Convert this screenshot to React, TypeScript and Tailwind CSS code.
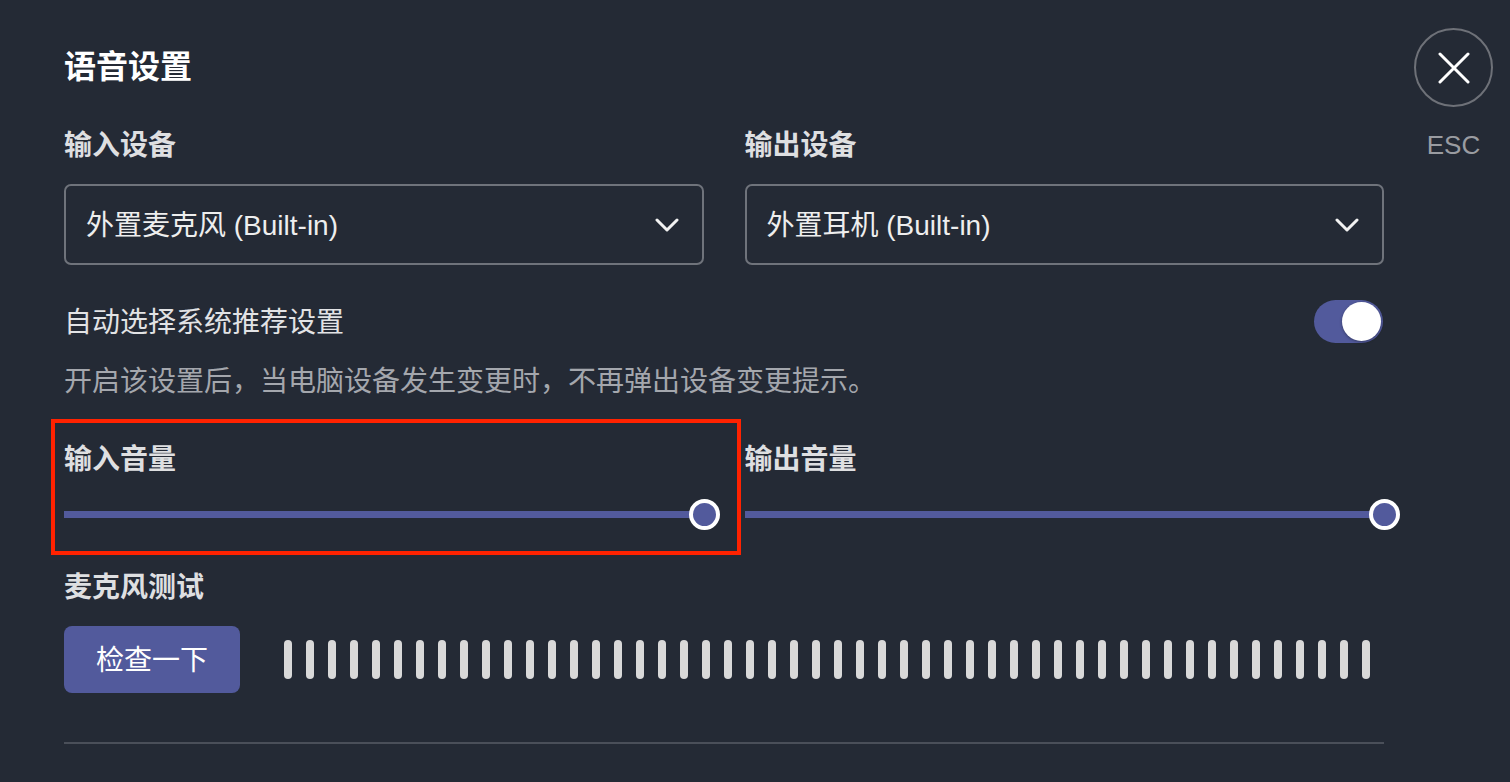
import { useState } from "react";

const FONT = "font-['Liberation_Sans','Noto_Sans_CJK_SC',sans-serif]";

function Chevron() {
  return (
    <svg width="24" height="16" viewBox="0 0 24 16" fill="none">
      <polyline
        points="2,3 12,13 22,3"
        stroke="#f2f2f2"
        strokeWidth="3"
        strokeLinecap="round"
        strokeLinejoin="round"
      />
    </svg>
  );
}

function DeviceSelect({ label, value }: { label: string; value: string }) {
  return (
    <div className="flex flex-col">
      <p className="pt-[2px] text-[28px] leading-[40px] font-bold text-[#dedfe1]">{label}</p>
      <div className="mt-[18px] h-[81px] rounded-[7px] border-2 border-[#6f737b] flex items-center justify-between pl-[20px] pr-[23px]">
        <span className="pt-[3px] text-[28px] leading-[40px] text-[#eeeeee]">{value}</span>
        <Chevron />
      </div>
    </div>
  );
}

function VolumeSlider({ label, marked }: { label: string; marked?: boolean }) {
  return (
    <div className="relative flex flex-col">
      {/* annotation frame */}
      {marked && (
        <div className="absolute -left-[13px] -top-[19px] w-[690px] h-[136px] border-[4px] border-[#ff2200] pointer-events-none" />
      )}
      <p className="pt-[2px] text-[28px] leading-[40px] font-bold text-[#dedfe1]">{label}</p>
      <div className="relative mt-[19px] h-[31px] flex items-center">
        <div className="w-full h-[7px] bg-[#525a9c]" />
        <div className="absolute -right-[16px] top-0 w-[31px] h-[31px] rounded-full bg-[#525a9c] border-[4px] border-white" />
      </div>
    </div>
  );
}

export default function App() {
  const [autoPick, setAutoPick] = useState(true);
  const bars = Array.from({ length: 50 }, (_, i) => i);

  return (
    <div className={`w-[1510px] h-[782px] bg-[#242a35] flex pl-[64px] pt-[28px] overflow-hidden ${FONT}`}>
      {/* MAIN */}
      <div className="w-[1320px] flex flex-col">
        <h1 className="mt-[19px] text-[32px] leading-[40px] font-bold text-white">语音设置</h1>

        <div className="mt-[37px] grid grid-cols-2 gap-x-[41px]">
          <DeviceSelect label="输入设备" value="外置麦克风 (Built-in)" />
          <DeviceSelect label="输出设备" value="外置耳机 (Built-in)" />
        </div>

        {/* AUTO SELECT */}
        <div className="mt-[35px] h-[43px] flex items-center justify-between">
          <span className="pt-[2px] text-[28px] leading-[40px] text-[#e2e3e5]">自动选择系统推荐设置</span>
          <button
            onClick={() => setAutoPick(!autoPick)}
            className={`mr-[1px] w-[69px] h-[43px] rounded-full p-[2px] flex ${
              autoPick ? "bg-[#525a9c] justify-end" : "bg-[#4b505a] justify-start"
            }`}
          >
            <span className="w-[39px] h-[39px] rounded-full bg-white shadow-[0_1px_3px_rgba(0,0,0,0.35)]" />
          </button>
        </div>
        <p className="mt-[17px] pt-[2px] text-[28px] leading-[40px] text-[#a4a7ad]">
          开启该设置后，当电脑设备发生变更时，不再弹出设备变更提示。
        </p>

        {/* VOLUMES */}
        <div className="mt-[36px] grid grid-cols-2 gap-x-[41px]">
          <VolumeSlider label="输入音量" marked />
          <VolumeSlider label="输出音量" />
        </div>

        {/* MIC TEST */}
        <p className="mt-[36px] pt-[2px] text-[28px] leading-[40px] font-bold text-[#dedfe1]">麦克风测试</p>
        <div className="mt-[18px] flex items-center">
          <button className="w-[176px] h-[67px] rounded-[8px] bg-[#525a9c] pt-[2px] text-[28px] leading-[40px] text-white">
            检查一下
          </button>
          <div className="ml-[44px] flex gap-[14px]">
            {bars.map((b) => (
              <span key={b} className="w-[8px] h-[39px] rounded-full bg-[#d9d9d9]" />
            ))}
          </div>
        </div>

        <div className="mt-[49px] h-[2px] bg-[#4a4f59]" />
      </div>

      {/* CLOSE */}
      <div className="ml-[30px] w-[79px] flex flex-col items-center">
        <button className="w-[79px] h-[79px] rounded-full border-2 border-[#6e7178] flex items-center justify-center">
          <svg width="32" height="32" viewBox="0 0 32 32" fill="none">
            <path d="M2 2 30 30 M30 2 2 30" stroke="#ffffff" strokeWidth="3" strokeLinecap="round" />
          </svg>
        </button>
        <span className="mt-[23px] text-[26px] leading-[30px] text-[#9a9ca1]">ESC</span>
      </div>
    </div>
  );
}
